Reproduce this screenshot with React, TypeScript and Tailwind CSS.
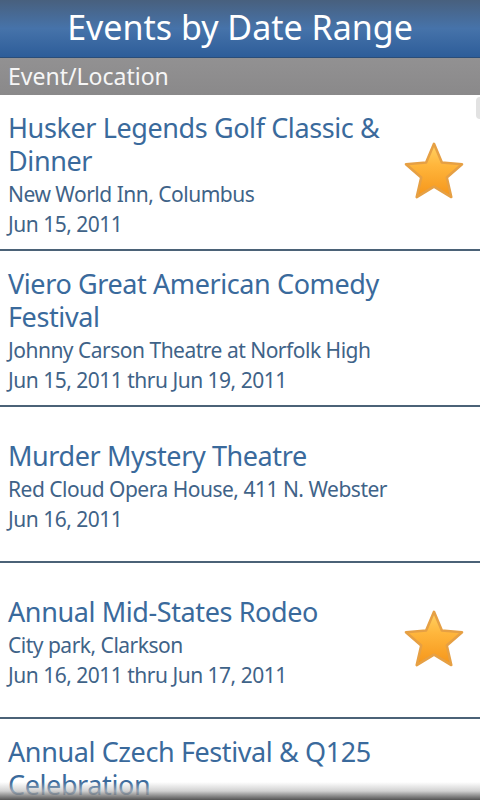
const events = [
  { title: "Husker Legends Golf Classic & Dinner", place: "New World Inn, Columbus", date: "Jun 15, 2011", fav: true },
  { title: "Viero Great American Comedy Festival", place: "Johnny Carson Theatre at Norfolk High", date: "Jun 15, 2011 thru Jun 19, 2011", fav: false },
  { title: "Murder Mystery Theatre", place: "Red Cloud Opera House, 411 N. Webster", date: "Jun 16, 2011", fav: false },
  { title: "Annual Mid-States Rodeo", place: "City park, Clarkson", date: "Jun 16, 2011 thru Jun 17, 2011", fav: true },
  { title: "Annual Czech Festival & Q125 Celebration", place: "Wilber", date: "Jun 17, 2011 thru Jun 19, 2011", fav: false },
];

function Star() {
  return (
    <svg width="64" height="64" viewBox="0 0 100 100">
      <defs>
        <linearGradient id="starFill" x1="0" y1="0" x2="0" y2="1">
          <stop offset="0%" stopColor="#ffd264" />
          <stop offset="40%" stopColor="#ffb63c" />
          <stop offset="100%" stopColor="#f5951a" />
        </linearGradient>
      </defs>
      <path
        d="M50 6 L62.3 35 L93.8 37.8 L70 58.5 L77 89.2 L50 73 L23 89.2 L30 58.5 L6.2 37.8 L37.7 35 Z"
        fill="url(#starFill)"
        stroke="#e6a044"
        strokeWidth="4"
        strokeLinejoin="round"
      />
    </svg>
  );
}

export default function App() {
  return (
    <div className="relative w-[480px] h-[800px] overflow-hidden bg-white flex flex-col" style={{ fontFamily: '"Noto Sans", "Open Sans", sans-serif' }}>
      <div className="h-[58px] shrink-0 flex items-center justify-center bg-gradient-to-b from-[#48607e] via-[#4673aa] to-[#2d5d99] border-b border-[#2a4d78]">
        <h1 className="text-white text-[34px] leading-none pb-[4px]">Events by Date Range</h1>
      </div>
      <div className="h-[37px] shrink-0 flex items-center px-[8px] bg-gradient-to-b from-[#929192] to-[#8a898a]">
        <span className="text-[#f6f6f6] text-[23px] leading-none">Event/Location</span>
      </div>
      <div className="relative flex flex-col">
        {events.map((e) => (
          <div key={e.title} className="h-[156px] shrink-0 flex items-center border-b-2 border-[#4b6277] pl-[8px]">
            <div className="flex-1 min-w-0 pr-[6px] pt-[5px]">
              <div className="text-[#3a6a9c] text-[27px] leading-[33px] tracking-[-0.4px]">{e.title}</div>
              <div className="text-[#3f6388] text-[21px] leading-[30px] tracking-[-0.5px] mt-[2px]">{e.place}</div>
              <div className="text-[#3f6388] text-[21px] leading-[30px] tracking-[-0.5px]">{e.date}</div>
            </div>
            {e.fav && (
              <div className="w-[64px] shrink-0 mr-[14px] ml-[4px] flex items-center justify-center">
                <Star />
              </div>
            )}
          </div>
        ))}
        <div className="absolute right-0 top-[2px] w-[4px] h-[22px] bg-[#e2e2e2] rounded-l" />
      </div>
      <div className="absolute bottom-0 left-0 right-0 h-[18px] bg-gradient-to-b from-white/0 via-[#bdbdbd]/70 to-[#555]" />
    </div>
  );
}
